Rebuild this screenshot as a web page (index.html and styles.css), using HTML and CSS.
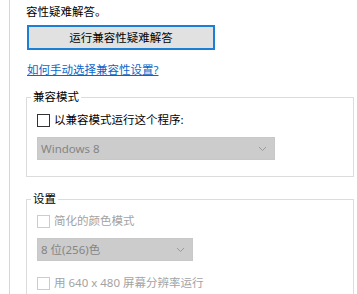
FILE: index.html
```html
<!DOCTYPE html>
<html lang="zh-CN">
<head>
<meta charset="utf-8">
<link rel="stylesheet" href="styles.css">
</head>
<body>
<div class="page">
  <div class="panel">
    <div class="intro">容性疑难解答。</div>
    <button class="run-btn" type="button">运行兼容性疑难解答</button>
    <div class="link-row"><a class="link" href="#">如何手动选择兼容性设置?</a></div>

    <fieldset class="group group-compat">
      <legend class="legend">兼容模式</legend>
      <div class="check-row">
        <span class="box"></span>
        <span class="label">以兼容模式运行这个程序:</span>
      </div>
      <div class="select select-wide">
        <span class="select-text">Windows 8</span>
        <svg class="chev" width="9" height="6" viewBox="0 0 9 6"><polyline points="1,1 4.5,4.5 8,1" fill="none" stroke="#9a9a9a" stroke-width="1"/></svg>
      </div>
    </fieldset>

    <fieldset class="group group-settings">
      <legend class="legend">设置</legend>
      <div class="check-row disabled first">
        <span class="box"></span>
        <span class="label">简化的颜色模式</span>
      </div>
      <div class="select select-narrow">
        <span class="select-text">8 位(256)色</span>
        <svg class="chev" width="9" height="6" viewBox="0 0 9 6"><polyline points="1,1 4.5,4.5 8,1" fill="none" stroke="#9a9a9a" stroke-width="1"/></svg>
      </div>
      <div class="check-row disabled last">
        <span class="box"></span>
        <span class="label">用 640 x 480 屏幕分辨率运行</span>
      </div>
    </fieldset>
  </div>
</div>
</body>
</html>
```

FILE: styles.css
```css
html, body {
  margin: 0;
  padding: 0;
  background: #ffffff;
}

body {
  font-family: "Noto Sans", "Noto Sans CJK SC", sans-serif;
  font-size: 11.5px;
  color: #000000;
  overflow: hidden;
}

.page {
  padding-left: 9px;
  height: 294px;
}

.panel {
  border-left: 1px solid #d6d6d6;
  padding-left: 16px;
  height: 100%;
  display: flex;
  flex-direction: column;
  align-items: flex-start;
}

.intro {
  margin-top: 2px;
  line-height: 20px;
  height: 20px;
}

.run-btn {
  margin: 3px 0 0 1px;
  width: 188px;
  height: 25px;
  padding: 0;
  background: #e1e1e1;
  border: 2px solid #1c7fd6;
  font-family: "Noto Sans", "Noto Sans CJK SC", sans-serif;
  font-size: 11.5px;
  color: #000000;
  line-height: 20px;
}

.link-row {
  margin-top: 11px;
  line-height: 18px;
  height: 18px;
  padding-left: 1px;
}

.link {
  color: #0a66c8;
  text-decoration: underline;
}

.group {
  margin: 0;
  border: 1px solid #dcdcdc;
  width: 328px;
  box-sizing: border-box;
  padding: 0 0 0 10px;
  min-inline-size: 0;
}

.group-compat {
  margin-top: 10px;
  padding-bottom: 16px;
}

.group-settings {
  margin-top: 14px;
  border-bottom: none;
  flex: 1;
}

.legend {
  margin-left: -6px;
  padding: 0 2px;
  line-height: 16px;
  height: 16px;
}

.check-row {
  display: flex;
  align-items: center;
  height: 18px;
  margin-top: 6px;
}

.check-row.first {
  margin-top: 5px;
}

.check-row.last {
  margin-top: 13px;
}

.box {
  width: 13px;
  height: 13px;
  box-sizing: border-box;
  border: 1px solid #333333;
  background: #ffffff;
  flex: none;
}

.label {
  margin-left: 4px;
  line-height: 18px;
}

.check-row.disabled .box {
  border-color: #cccccc;
}

.check-row.disabled .label {
  color: #a3a3a3;
}

.select {
  margin-top: 8px;
  height: 23px;
  box-sizing: border-box;
  background: #cccccc;
  border: 1px solid #c8c8c8;
  display: flex;
  align-items: center;
  justify-content: space-between;
  padding: 0 7px 0 3px;
}

.select-wide {
  width: 238px;
}

.select-narrow {
  width: 156px;
  height: 23px;
}

.select-text {
  color: #858585;
  font-size: 11.5px;
  line-height: 20px;
}

.chev {
  display: block;
  flex: none;
}
```
